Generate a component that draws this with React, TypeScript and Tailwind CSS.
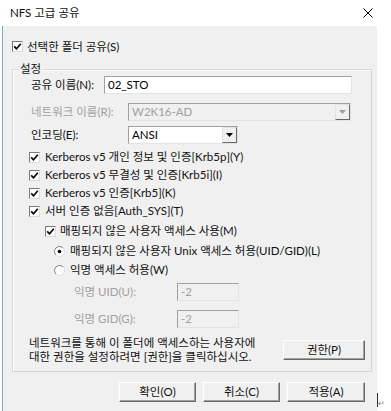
import React from "react";

const Check = ({ checked = true }: { checked?: boolean }) => (
  <span className="w-[11px] h-[11px] shrink-0 bg-white border border-t-[#7a7a7a] border-l-[#7a7a7a] border-r-[#dcdcdc] border-b-[#dcdcdc] flex items-center justify-center">
    {checked && (
      <svg width="9" height="9" viewBox="0 0 9 9">
        <path d="M1.2 4.4 L3.5 6.8 L7.8 1.8" fill="none" stroke="#000" strokeWidth="1.6" />
      </svg>
    )}
  </span>
);

const Radio = ({ checked = false }: { checked?: boolean }) => (
  <svg width="11" height="11" viewBox="0 0 11 11" className="shrink-0">
    <circle cx="5.5" cy="5.5" r="5" fill="#fff" />
    <path d="M1.96 9.04 A5 5 0 0 1 9.04 1.96" fill="none" stroke="#7a7a7a" strokeWidth="1" />
    <path d="M9.04 1.96 A5 5 0 0 1 1.96 9.04" fill="none" stroke="#dcdcdc" strokeWidth="1" />
    {checked && <circle cx="5.5" cy="5.5" r="1.8" fill="#000" />}
  </svg>
);

const Arrow = ({ color }: { color: string }) => (
  <svg width="7" height="4" viewBox="0 0 7 4">
    <path d="M0 0 H7 L3.5 4 Z" fill={color} />
  </svg>
);

const Field = ({
  value,
  width,
  disabled = false,
  combo = false,
}: {
  value: string;
  width: string;
  disabled?: boolean;
  combo?: boolean;
}) => (
  <div
    className={`${width} h-[18px] flex items-center border border-t-[#a0a0a0] border-l-[#a0a0a0] border-r-[#e3e3e3] border-b-[#e3e3e3] ${
      disabled ? "bg-[#f0f0f0] text-[#a0a0a0]" : "bg-white text-black"
    }`}
  >
    <span className="flex-1 pl-[3px] leading-none">{value}</span>
    {combo && (
      <span className="w-[15px] h-[16px] flex items-center justify-center bg-[#f0f0f0] border border-t-[#e3e3e3] border-l-[#e3e3e3] border-r-[#696969] border-b-[#696969]">
        <Arrow color={disabled ? "#a0a0a0" : "#000"} />
      </span>
    )}
  </div>
);

const Btn = ({ label, width }: { label: string; width: string }) => (
  <div
    className={`${width} h-[20px] flex items-center justify-center bg-[#f0f0f0] border border-t-white border-l-white border-r-[#696969] border-b-[#696969] shadow-[inset_-1px_-1px_0_#a0a0a0]`}
  >
    {label}
  </div>
);

const CheckRow = ({ label, className = "" }: { label: string; className?: string }) => (
  <div className={`h-[18px] flex items-center gap-[5px] ${className}`}>
    <Check />
    <span>{label}</span>
  </div>
);

export default function App() {
  return (
    <div className="flex w-[391px] h-[411px] bg-white text-[11.5px] leading-[16px] text-[#111] font-['Lato','Noto_Sans_CJK_KR',sans-serif]">
      <div className="w-[377px] flex flex-col">
        <div className="h-[26px] shrink-0 flex items-center justify-between pl-[10px] pr-[4px] bg-white">
          <span>NFS 고급 공유</span>
          <svg width="10" height="10" viewBox="0 0 10 10">
            <path d="M0.5 0.5 L9.5 9.5 M9.5 0.5 L0.5 9.5" stroke="#000" strokeWidth="1" />
          </svg>
        </div>

        <div className="flex-1 ml-[2px] border-l border-[#7ea4d8] bg-[#f0f0f0] flex flex-col">
          <div className="mt-[14px] ml-[9px] h-[13px] flex items-center gap-[4px]">
            <Check />
            <span>선택한 폴더 공유(S)</span>
          </div>

          <div className="relative mt-[16px] ml-[9px] w-[360px] h-[303px] border border-[#d5d5d5] shadow-[inset_1px_1px_0_#fff]">
            <span className="absolute -top-[9px] left-[5px] px-[2px] bg-[#f0f0f0]">설정</span>

            <div className="pl-[16px] pt-[6px] flex flex-col">
              <div className="h-[18px] flex items-center">
                <span className="w-[75px] pl-[2px]">공유 이름(N):</span>
                <Field value="02_STO" width="w-[248px]" />
              </div>
              <div className="mt-[9px] h-[18px] flex items-center">
                <span className="w-[99px] pl-[2px] text-[#a0a0a0]">네트워크 이름(R):</span>
                <Field value="W2K16-AD" width="w-[223px]" disabled combo />
              </div>
              <div className="mt-[5px] h-[18px] flex items-center">
                <span className="w-[99px] pl-[2px]">인코딩(E):</span>
                <Field value="ANSI" width="w-[110px]" combo />
              </div>

              <CheckRow className="mt-[4px]" label="Kerberos v5 개인 정보 및 인증[Krb5p](Y)" />
              <CheckRow label="Kerberos v5 무결성 및 인증[Krb5i](I)" />
              <CheckRow label="Kerberos v5 인증[Krb5](K)" />
              <CheckRow label="서버 인증 없음[Auth_SYS](T)" />

              <div className="mt-[2px] pl-[16px] h-[18px] flex items-center gap-[4px]">
                <Check />
                <span>매핑되지 않은 사용자 액세스 사용(M)</span>
              </div>
              <div className="mt-[2px] pl-[25px] h-[18px] flex items-center gap-[5px]">
                <Radio checked />
                <span>매핑되지 않은 사용자 Unix 액세스 허용(UID/GID)(L)</span>
              </div>
              <div className="mt-[1px] pl-[25px] h-[18px] flex items-center gap-[5px]">
                <Radio />
                <span>익명 액세스 허용(W)</span>
              </div>

              <div className="mt-[4px] pl-[45px] h-[18px] flex items-center text-[#a0a0a0]">
                <span className="w-[103px]">익명 UID(U):</span>
                <Field value="-2" width="w-[62px]" disabled />
              </div>
              <div className="mt-[9px] pl-[45px] h-[18px] flex items-center text-[#a0a0a0]">
                <span className="w-[103px]">익명 GID(G):</span>
                <Field value="-2" width="w-[62px]" disabled />
              </div>

              <div className="mt-[8px] pr-[6px] h-[28px] flex items-center justify-between">
                <p className="leading-[14px]">
                  네트워크를 통해 이 폴더에 액세스하는 사용자에
                  <br />
                  대한 권한을 설정하려면 [권한]을 클릭하십시오.
                </p>
                <Btn label="권한(P)" width="w-[82px]" />
              </div>
            </div>
          </div>

          <div className="mt-[10px] pr-[12px] flex justify-end gap-[7px]">
            <Btn label="확인(O)" width="w-[77px]" />
            <Btn label="취소(C)" width="w-[77px]" />
            <Btn label="적용(A)" width="w-[78px]" />
          </div>
        </div>
      </div>

      <div className="flex-1 flex items-end pb-[4px]">
        <span className="w-px h-[14px] bg-[#333]" />
        <span className="text-[8px] leading-none text-[#888]">↵</span>
      </div>
    </div>
  );
}
